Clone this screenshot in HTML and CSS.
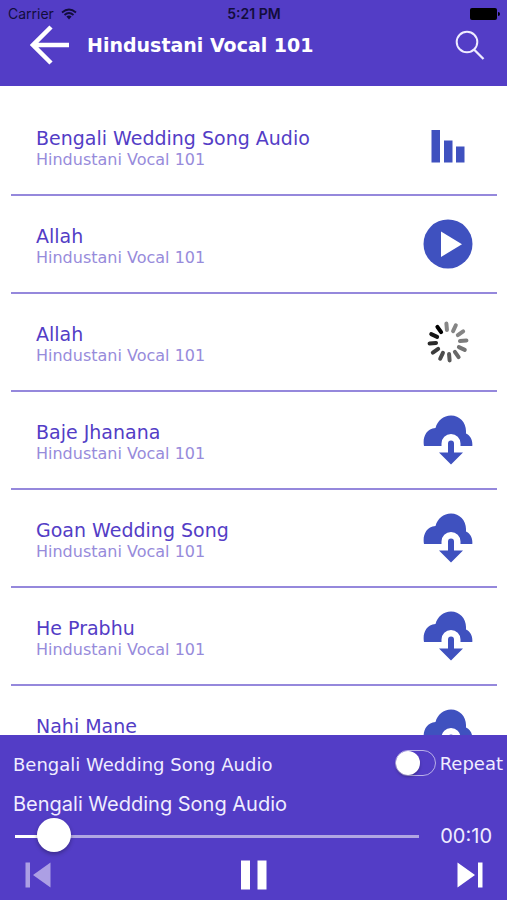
FILE: index.html
```html
<!DOCTYPE html>
<html lang="en">
<head>
<meta charset="utf-8">
<meta name="viewport" content="width=device-width, initial-scale=1">
<title>Hindustani Vocal 101</title>
<link rel="stylesheet" href="styles.css">
</head>
<body>
<svg class="defs" aria-hidden="true">
  <symbol id="cloud" viewBox="0 0 50 50">
    <path d="M1 31C-.5 23 2.500 14 12.500 13C14.500 5.500 20.500 .5 28 .5C36.500 .5 43 7.500 43 16V18.500C47.500 20.500 49.800 25 49.300 31H37.500V28.500A9.500 9.500 0 0 0 18.500 28.500V31Z"/>
    <path d="M25 28.500A3 3 0 0 1 31 28.500V37.500H40L28 49.500L16 37.500H25Z"/>
  </symbol>
</svg>
<header class="header">
  <div class="status">
    <span class="carrier">Carrier
      <svg class="wifi" viewBox="0 0 16 12"><path d="M1 4.500Q8-1.500 15 4.500M3.500 7Q8 3 12.500 7" fill="none" stroke="#120d3c" stroke-width="1.800"/><path d="M5.400 8.600Q8 6.400 10.600 8.600L8 11.500Z" fill="#120d3c"/></svg>
    </span>
    <span class="clock">5:21 PM</span>
    <svg class="battery" viewBox="0 0 30 12"><rect width="27" height="12" rx="2"/><path d="M28 4Q30 4 30 6T28 8Z"/></svg>
  </div>
  <div class="bar">
    <button class="icon-button" aria-label="Back"><svg class="back" viewBox="0 0 40 40"><path d="M39 20H3M21 2L3 20L21 38" fill="none" stroke="#fff" stroke-width="4.500"/></svg></button>
    <h1 class="heading">Hindustani Vocal 101</h1>
    <button class="icon-button" aria-label="Search"><svg class="search" viewBox="0 0 30 30"><circle cx="12" cy="12" r="10.300" fill="none" stroke="#efecff" stroke-width="2"/><path d="M19 19.500L28.500 29" stroke="#efecff" stroke-width="2.300"/></svg></button>
  </div>
</header>
<main class="list-area">
  <ul class="list">
    <li class="row"><div class="info"><span class="title">Bengali Wedding Song Audio</span><span class="sub">Hindustani Vocal 101</span></div>
      <button class="icon-button" aria-label="Now playing"><svg class="action" viewBox="0 0 50 50"><path d="M8.500 9H17V41.500H8.500ZM21 19.500H29.500V41.500H21ZM33 25.500H41.500V41.500H33Z"/></svg></button></li>
    <li class="row"><div class="info"><span class="title">Allah</span><span class="sub">Hindustani Vocal 101</span></div>
      <button class="icon-button" aria-label="Play"><svg class="action" viewBox="0 0 50 50"><circle cx="25" cy="25" r="24.500"/><path d="M18 12.500V38L39 25.300Z" fill="#fff"/></svg></button></li>
    <li class="row"><div class="info"><span class="title">Allah</span><span class="sub">Hindustani Vocal 101</span></div>
      <svg class="action spinner" viewBox="-25 -25 50 50" role="img" aria-label="Loading">
        <g transform="rotate(-5)">
          <path d="M0-12V-18.500" stroke="#888"/>
          <path d="M0-12V-18.500" stroke="#858585" transform="rotate(30)"/>
          <path d="M0-12V-18.500" stroke="#858585" transform="rotate(60)"/>
          <path d="M0-12V-18.500" stroke="#7c7c7c" transform="rotate(90)"/>
          <path d="M0-12V-18.500" stroke="#747474" transform="rotate(120)"/>
          <path d="M0-12V-18.500" stroke="#686868" transform="rotate(150)"/>
          <path d="M0-12V-18.500" stroke="#5a5a5a" transform="rotate(180)"/>
          <path d="M0-12V-18.500" stroke="#4c4c4c" transform="rotate(210)"/>
          <path d="M0-12V-18.500" stroke="#3c3c3c" transform="rotate(240)"/>
          <path d="M0-12V-18.500" stroke="#2a2a2a" transform="rotate(270)"/>
          <path d="M0-12V-18.500" stroke="#161616" transform="rotate(300)"/>
          <path d="M0-12V-18.500" stroke="#000" transform="rotate(330)"/>
        </g>
      </svg></li>
    <li class="row"><div class="info"><span class="title">Baje Jhanana</span><span class="sub">Hindustani Vocal 101</span></div>
      <button class="icon-button" aria-label="Download Baje Jhanana"><svg class="action"><use href="#cloud"/></svg></button></li>
    <li class="row"><div class="info"><span class="title">Goan Wedding Song</span><span class="sub">Hindustani Vocal 101</span></div>
      <button class="icon-button" aria-label="Download Goan Wedding Song"><svg class="action"><use href="#cloud"/></svg></button></li>
    <li class="row"><div class="info"><span class="title">He Prabhu</span><span class="sub">Hindustani Vocal 101</span></div>
      <button class="icon-button" aria-label="Download He Prabhu"><svg class="action"><use href="#cloud"/></svg></button></li>
    <li class="row"><div class="info"><span class="title">Nahi Mane</span><span class="sub">Hindustani Vocal 101</span></div>
      <button class="icon-button" aria-label="Download Nahi Mane"><svg class="action"><use href="#cloud"/></svg></button></li>
  </ul>
</main>
<footer class="player">
  <div class="now">
    <span class="now-title">Bengali Wedding Song Audio</span>
    <label class="repeat"><input class="switch" type="checkbox">Repeat</label>
  </div>
  <label class="track-title" for="seek">Bengali Wedding Song Audio</label>
  <div class="seek-row">
    <input class="seek" id="seek" type="range" min="0" max="100" value="6">
    <span class="time">00:10</span>
  </div>
  <div class="controls">
    <button class="icon-button" aria-label="Previous"><svg class="skip dim" viewBox="0 0 26 26"><path d="M.5.500H5V25.500H.5ZM25.500.500V25.500L8 13Z"/></svg></button>
    <button class="icon-button" aria-label="Pause"><svg class="pause" viewBox="0 0 26 30"><path d="M0 .500H9V29.500H0ZM16.500.500H25.500V29.500H16.500Z"/></svg></button>
    <button class="icon-button" aria-label="Next"><svg class="skip" viewBox="0 0 26 26"><path d="M.5.500V25.500L18 13ZM21 .500H25.500V25.500H21Z"/></svg></button>
  </div>
</footer>
</body>
</html>
```
FILE: styles.css
```css
* { box-sizing: border-box; }
body {
  margin: 0;
  height: 100vh;
  display: flex;
  flex-direction: column;
  background: #fff;
  color: #533dc6;
  font-family: "DejaVu Sans", sans-serif;
  overflow: hidden;
}
.defs { display: none; }
svg { display: block; }
.icon-button {
  margin: 0;
  padding: 0;
  border: 0;
  background: none;
  cursor: pointer;
}
.header {
  flex: none;
  padding-bottom: 20px;
  background: #533dc6;
}
.status {
  display: grid;
  grid-template-columns: 1fr auto 1fr;
  align-items: center;
  height: 23px;
  padding: 4px 7px 0 8px;
  color: #120d3c;
  font: 14px/18px Inter, sans-serif;
}
.carrier { display: flex; align-items: center; gap: 7px; }
.wifi { width: 16px; height: 12px; }
.clock { font-weight: 600; }
.battery { width: 30px; height: 12px; justify-self: end; fill: #000; }
.bar {
  display: flex;
  align-items: center;
  height: 43px;
  padding: 0 22px 0 30px;
}
.back { width: 40px; height: 40px; }
.search { width: 30px; height: 30px; }
.heading {
  flex: 1;
  margin: 0 0 0 17px;
  color: #fff;
  font-size: 19px;
  line-height: 24px;
}
.list-area { flex: 1; min-height: 0; overflow: hidden; }
.list {
  list-style: none;
  margin: 0;
  padding: 12px 10px 0 11px;
}
.row {
  display: flex;
  justify-content: space-between;
  align-items: center;
  height: 98px;
  padding: 0 24px 0 25px;
  border-bottom: 2px solid #9588dc;
}
.info { display: flex; flex-direction: column; padding-top: 4px; }
.title { font-size: 19px; line-height: 24px; }
.sub { font-size: 16px; line-height: 20px; color: #978bdb; }
.action { width: 50px; height: 50px; fill: #3f51bf; }
.spinner { stroke-width: 4px; stroke-linecap: round; }
.player {
  flex: none;
  padding-bottom: 9px;
  background: #533dc6;
  color: #f0edff;
}
.now {
  display: flex;
  justify-content: space-between;
  align-items: center;
  height: 56px;
  padding: 0 4px 0 13px;
  font-size: 18px;
}
.now-title { padding-top: 2px; }
.repeat { display: flex; align-items: center; gap: 4px; }
.switch {
  appearance: none;
  width: 41px;
  height: 26px;
  margin: 0;
  border: 1px solid #b9b0e8;
  border-radius: 13px;
  display: flex;
  align-items: center;
}
.switch::before {
  content: "";
  width: 24px;
  height: 24px;
  border-radius: 50%;
  background: #fff;
  box-shadow: 0 2px 3px rgba(0, 0, 0, .25);
}
.switch:checked { justify-content: flex-end; }
.track-title {
  display: block;
  padding: 0 13px;
  font: 20px/26px Inter, sans-serif;
}
.seek-row {
  display: flex;
  align-items: center;
  gap: 21px;
  height: 36px;
  padding: 0 15px;
}
.seek {
  appearance: none;
  flex: 1;
  min-width: 0;
  height: 34px;
  margin: 0;
  background: linear-gradient(#fff, #fff) 0 17px / 10% 3px no-repeat,
    linear-gradient(#b0a6e2, #b0a6e2) 0 17px / 100% 3px no-repeat;
}
.seek::-webkit-slider-thumb {
  appearance: none;
  width: 34px;
  height: 34px;
  border-radius: 50%;
  background: #fff;
  box-shadow: 0 2px 4px rgba(0, 0, 0, .3);
}
.time { padding-top: 2px; font: 20px/24px Inter, sans-serif; }
.controls {
  display: grid;
  grid-template-columns: 1fr auto 1fr;
  align-items: center;
  height: 38px;
  padding: 6px 24px 0 25px;
  fill: #fff;
}
.controls > :first-child { justify-self: start; }
.controls > :last-child { justify-self: end; }
.skip { width: 26px; height: 26px; }
.dim { fill: #ac9fe4; }
.pause { width: 26px; height: 30px; }
```
